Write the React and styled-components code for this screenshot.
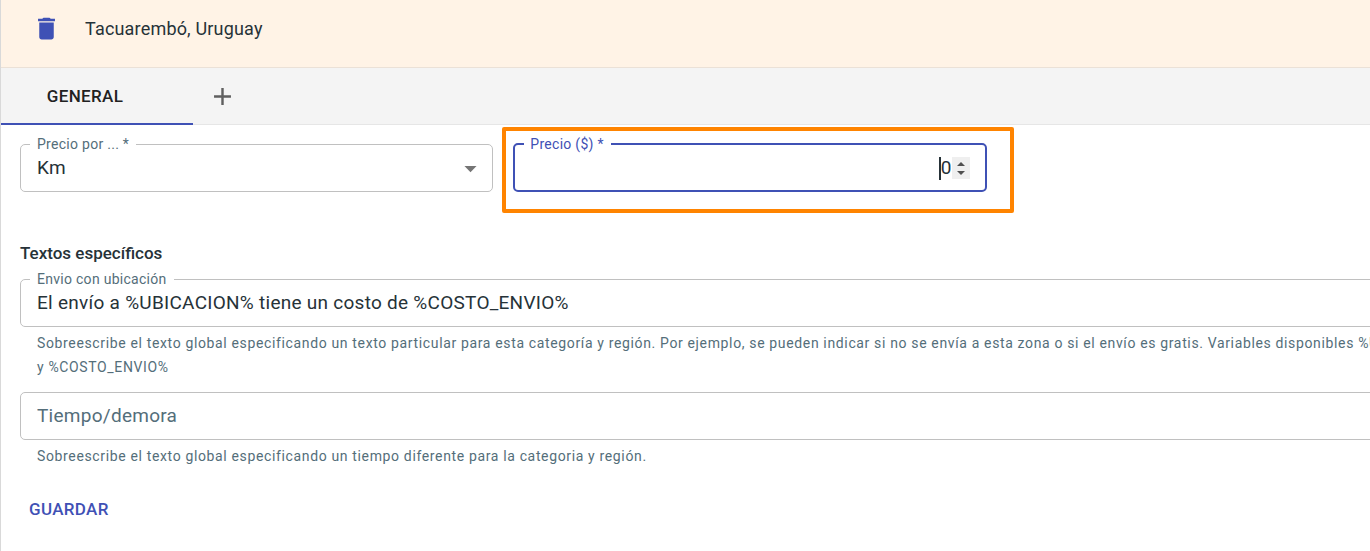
import React, { useState } from "react";
import styled, { createGlobalStyle, ThemeProvider, css } from "styled-components";

const theme = {
  primary: "#3f51b5",
  text: "#263238",
  muted: "#546e7a",
  outline: "#c0c0c0",
  highlight: "#ff8400",
};

const GlobalStyle = createGlobalStyle`
  *, *::before, *::after { box-sizing: border-box; }
  body {
    margin: 0;
    background: #fff;
    color: ${theme.text};
    font-family: Roboto, "Liberation Sans", sans-serif;
    -webkit-font-smoothing: antialiased;
  }
  button, input, select { font: inherit; letter-spacing: inherit; color: inherit; }
`;

const Page = styled.main`
  min-height: 100vh;
  overflow: hidden;
  border-left: 1px solid #d9d9d9;
`;

const RegionHeader = styled.header`
  display: flex;
  align-items: center;
  gap: 24px;
  height: 68px;
  padding: 0 31px 10px;
  background: #fff3e6;
  border-bottom: 1px solid #ebe1d7;
`;

const IconButton = styled.button`
  display: flex;
  padding: 0;
  border: 0;
  background: none;
  color: ${(p) => p.theme.primary};
  cursor: pointer;
`;

const RegionName = styled.h1`
  margin: 0;
  font-size: 18px;
  line-height: 24px;
  font-weight: 400;
  letter-spacing: 0.01em;
`;

const TabBar = styled.nav`
  display: flex;
  height: 57px;
  background: #f4f4f4;
  border-bottom: 1px solid #e6e6e6;
`;

const Tab = styled.button`
  display: flex;
  align-items: center;
  justify-content: center;
  min-width: ${(p) => (p.$compact ? "58px" : "192px")};
  height: 57px;
  padding: 0 24px 0 0;
  border: 0;
  border-bottom: 2px solid transparent;
  background: none;
  font-size: 17px;
  font-weight: 500;
  letter-spacing: 0.02em;
  color: #212121;
  cursor: pointer;
  ${(p) => p.$selected && css`border-bottom-color: ${p.theme.primary};`}
  ${(p) => p.$compact && css`padding: 2px 0 0; color: #5f5f5f;`}
`;

const Form = styled.form`
  width: calc(100% + 130px);
  padding: 9px 20px 20px 19px;
`;

const Columns = styled.div`
  display: grid;
  grid-template-columns: repeat(3, 1fr);
  gap: 20px;
  margin-bottom: 49px;
`;

const HighlightedCell = styled.div`
  position: relative;
  &::after {
    content: "";
    position: absolute;
    inset: -7px -27px -21px -11px;
    border: 4px solid ${(p) => p.theme.highlight};
    border-radius: 2px;
    pointer-events: none;
  }
`;

const Outline = styled.fieldset`
  position: relative;
  display: block;
  min-width: 0;
  height: ${(p) => (p.$plain ? "48px" : "58px")};
  margin: 0;
  padding: ${(p) => (p.$plain ? "9px 0" : "0")};
  border: ${(p) => (p.$active ? "2px" : "1px")} solid
    ${(p) => (p.$active ? p.theme.primary : p.theme.outline)};
  border-radius: 5px;
`;

const Legend = styled.legend`
  margin-left: 9px;
  padding: ${(p) => (p.$active ? "0 7px 0 6px" : "0 7px")};
  font-size: 14px;
  line-height: 20px;
  letter-spacing: 0.02em;
  color: ${(p) => (p.$active ? p.theme.primary : p.theme.muted)};
`;

const ControlRow = styled.div`
  display: flex;
  align-items: center;
  height: 28px;
  padding: 0 15px 0 16px;
  font-size: 19px;
  letter-spacing: 0.014em;
`;

const controlStyle = css`
  flex: 1;
  min-width: 0;
  height: 28px;
  padding: 0;
  border: 0;
  outline: 0;
  background: none;
  line-height: 28px;
`;

const TextInput = styled.input`
  ${controlStyle}
  &::placeholder { color: ${(p) => p.theme.muted}; opacity: 1; }
`;

const Select = styled.select`
  ${controlStyle}
  appearance: none;
`;

const SelectArrow = styled.svg`
  margin-right: -8px;
  pointer-events: none;
  fill: #757575;
`;

const NumberInput = styled.input`
  ${controlStyle}
  text-align: right;
  appearance: textfield;
  caret-color: transparent;
  &::-webkit-inner-spin-button { appearance: none; margin: 0; }
`;

const Caret = styled.span`
  position: absolute;
  right: 44px;
  width: 2px;
  height: 23px;
  background: ${(p) => p.theme.text};
`;

const Spinner = styled.div`
  display: flex;
  flex-direction: column;
  width: 18px;
  height: 22px;
  padding: 2px 0;
  background: #efefef;
`;

const SpinButton = styled.button`
  display: flex;
  flex: 1;
  align-items: center;
  justify-content: center;
  padding: 0;
  border: 0;
  background: none;
  color: #505050;
`;

const SectionTitle = styled.h2`
  margin: 0 0 4px;
  font-size: 17px;
  line-height: 24px;
  font-weight: 500;
`;

const Helper = styled.p`
  margin: 4px 16px 0 17px;
  font-size: 14px;
  line-height: 24px;
  letter-spacing: 0.046em;
  color: ${(p) => p.theme.muted};
`;

const FieldGroup = styled.div`
  margin-bottom: 13px;
`;

const SaveButton = styled.button`
  margin-top: 10px;
  padding: 6px 9px;
  border: 0;
  background: none;
  font-size: 17px;
  line-height: 24px;
  font-weight: 500;
  letter-spacing: 0.02em;
  color: ${(p) => p.theme.primary};
  cursor: pointer;
`;

export default function App() {
  const [price, setPrice] = useState(0);
  const [message, setMessage] = useState("El envío a %UBICACION% tiene un costo de %COSTO_ENVIO%");
  const [delay, setDelay] = useState("");

  return (
    <ThemeProvider theme={theme}>
      <GlobalStyle />
      <Page>
        <RegionHeader>
          <IconButton type="button" aria-label="Eliminar">
            <svg width="29" height="29" viewBox="0 0 24 24" fill="currentColor">
              <path d="M6 19c0 1.1.9 2 2 2h8c1.1 0 2-.9 2-2V7H6v12zM19 4h-3.5l-1-1h-5l-1 1H5v2h14V4z" />
            </svg>
          </IconButton>
          <RegionName>Tacuarembó, Uruguay</RegionName>
        </RegionHeader>

        <TabBar>
          <Tab type="button" $selected>GENERAL</Tab>
          <Tab type="button" $compact aria-label="Agregar">
            <svg width="29" height="29" viewBox="0 0 24 24" fill="currentColor">
              <path d="M19 13h-6v6h-2v-6H5v-2h6V5h2v6h6v2z" />
            </svg>
          </Tab>
        </TabBar>

        <Form onSubmit={(e) => e.preventDefault()}>
          <Columns>
            <Outline>
              <Legend><label htmlFor="unit">Precio por ... *</label></Legend>
              <ControlRow>
                <Select id="unit" defaultValue="km">
                  <option value="km">Km</option>
                </Select>
                <SelectArrow width="29" height="29" viewBox="0 0 24 24">
                  <path d="M7 10l5 5 5-5z" />
                </SelectArrow>
              </ControlRow>
            </Outline>
            <HighlightedCell>
              <Outline $active>
                <Legend $active><label htmlFor="price">Precio ($) *</label></Legend>
                <ControlRow>
                  <NumberInput
                    id="price"
                    type="number"
                    value={price}
                    onChange={(e) => setPrice(e.target.value)}
                  />
                  <Caret />
                  <Spinner>
                    <SpinButton type="button" aria-label="Aumentar" onClick={() => setPrice(Number(price) + 1)}>
                      <svg width="8" height="4" viewBox="0 0 8 4" fill="currentColor"><path d="M0 4L4 0l4 4z" /></svg>
                    </SpinButton>
                    <SpinButton type="button" aria-label="Disminuir" onClick={() => setPrice(Number(price) - 1)}>
                      <svg width="8" height="4" viewBox="0 0 8 4" fill="currentColor"><path d="M0 0h8L4 4z" /></svg>
                    </SpinButton>
                  </Spinner>
                </ControlRow>
              </Outline>
            </HighlightedCell>
          </Columns>

          <SectionTitle>Textos específicos</SectionTitle>
          <FieldGroup>
            <Outline>
              <Legend><label htmlFor="message">Envio con ubicación</label></Legend>
              <ControlRow>
                <TextInput id="message" type="text" value={message} onChange={(e) => setMessage(e.target.value)} />
              </ControlRow>
            </Outline>
            <Helper>
              Sobreescribe el texto global especificando un texto particular para esta categoría y región. Por
              ejemplo, se pueden indicar si no se envía a esta zona o si el envío es gratis. Variables disponibles
              %UBICACION% y&nbsp;%COSTO_ENVIO%
            </Helper>
          </FieldGroup>
          <FieldGroup>
            <Outline $plain>
              <ControlRow>
                <TextInput
                  type="text"
                  aria-label="Tiempo/demora"
                  placeholder="Tiempo/demora"
                  value={delay}
                  onChange={(e) => setDelay(e.target.value)}
                />
              </ControlRow>
            </Outline>
            <Helper>Sobreescribe el texto global especificando un tiempo diferente para la categoria y región.</Helper>
          </FieldGroup>
          <SaveButton type="submit">GUARDAR</SaveButton>
        </Form>
      </Page>
    </ThemeProvider>
  );
}
